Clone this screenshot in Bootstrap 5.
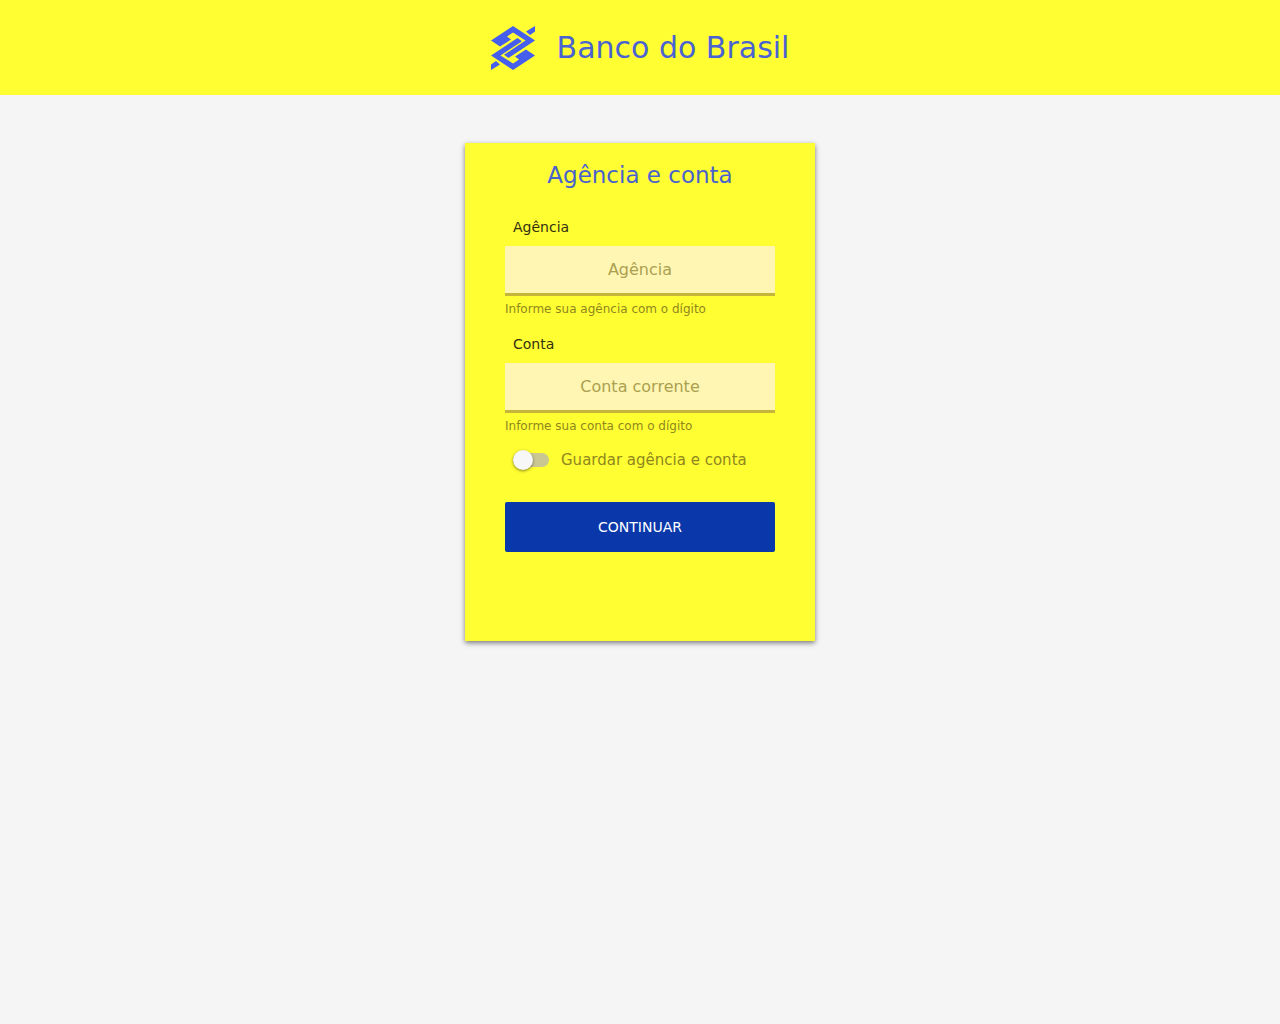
<!DOCTYPE html>
<html lang="pt-BR">
<head>
<meta charset="utf-8">
<meta name="viewport" content="width=device-width, initial-scale=1">
<title>Banco do Brasil</title>
<link href="https://cdn.jsdelivr.net/npm/bootstrap@5.3.0/dist/css/bootstrap.min.css" rel="stylesheet">
<style>
body { background: #f5f5f5; font-family: "DejaVu Sans", Verdana, sans-serif; color: #333; }
.topbar { background: #fffe32; height: 95px; gap: 22px; color: #4a62d2; }
.brand-name { font-size: 30px; line-height: 40px; }
.login-box { background: #fffe32; max-width: 350px; margin-top: 48px; padding: 16px 40px 89px; box-shadow: 0 2px 5px rgba(0,0,0,.5); }
.login-title { font-size: 23px; line-height: 32px; color: #4a62cc; margin-bottom: 26px; }
.field-label { font-size: 14px; line-height: 20px; margin-bottom: 9px; padding-left: 8px; color: #333012; }
.field-input, .field-input:focus { height: 50px; font-size: 16px; background: #fff6b4; border: 0; border-bottom: 3px solid #c5b53a; border-radius: 0; text-align: center; }
.field-input::placeholder { color: #aba04f; }
.field-hint { font-size: 12px; line-height: 18px; margin: 4px 0 16px; color: #8f871e; }
.save-row { gap: 12px; padding-left: 8px; margin-bottom: 30px; margin-top: -3px; font-size: 15px; line-height: 24px; color: #8f871e; }
.save-switch { appearance: none; width: 36px; height: 14px; margin: 0; border-radius: 7px; background: #cbc793; display: flex; align-items: center; }
.save-switch::before { content: ""; width: 20px; height: 20px; flex: none; border-radius: 50%; background: #f8f7f8; box-shadow: 0 1px 3px rgba(0,0,0,.5); }
.save-switch:checked::before { margin-left: 16px; }
.go-btn, .go-btn:hover { height: 50px; font-size: 14px; background: #0a38ab; color: #fff; border: 0; border-radius: 2px; }
</style>
</head>
<body>
<header class="topbar d-flex align-items-center justify-content-center">
<svg width="44" height="44" viewBox="0 0 44 44" fill="#465eec" aria-hidden="true">
<defs><g id="half">
<path d="M0 14.500 22 0 44 14.500 17.500 32 13 28.800 34.500 14.500 22 6.500 16 10.500 20 13.500 9 20.500Z"/>
<path d="M35 5.500 44 0V5.500L39 9Z"/>
</g></defs>
<use href="#half"/><use href="#half" transform="rotate(180 22 22)"/>
</svg>
<span class="brand-name">Banco do Brasil</span>
</header>
<main class="container-fluid pb-5">
<form class="login-box mx-auto">
<h1 class="login-title text-center fw-normal">Agência e conta</h1>
<label class="field-label d-block" for="agencia">Agência</label>
<input class="form-control field-input" id="agencia" type="text" placeholder="Agência" aria-describedby="agencia-hint">
<p class="field-hint" id="agencia-hint">Informe sua agência com o dígito</p>
<label class="field-label d-block" for="conta">Conta</label>
<input class="form-control field-input" id="conta" type="text" placeholder="Conta corrente" aria-describedby="conta-hint">
<p class="field-hint" id="conta-hint">Informe sua conta com o dígito</p>
<div class="save-row d-flex align-items-center">
<input class="save-switch" type="checkbox" role="switch" id="guardar">
<label for="guardar">Guardar agência e conta</label>
</div>
<button class="btn go-btn w-100" type="submit">CONTINUAR</button>
</form>
</main>
<script src="https://cdn.jsdelivr.net/npm/bootstrap@5.3.0/dist/js/bootstrap.bundle.min.js"></script>
</body>
</html>
